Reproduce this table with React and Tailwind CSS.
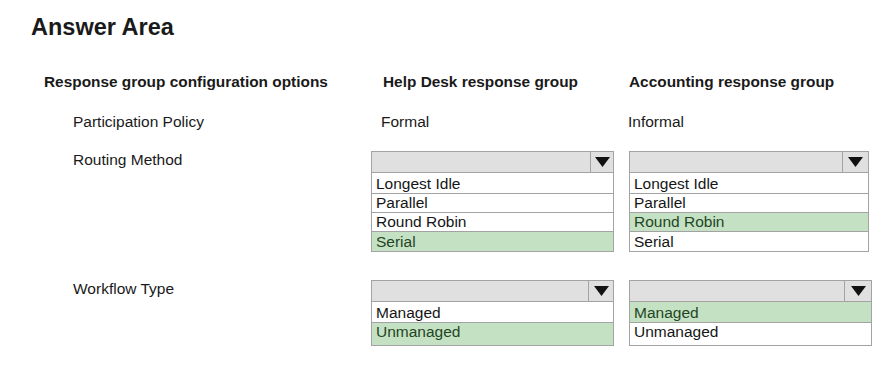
import React from 'react';

// Small down-pointing triangle used in the select headers
const Caret = () => (
    <svg width="15" height="10" viewBox="0 0 15 10">
        <polygon points="0,0 15,0 7.5,10" fill="#111" />
    </svg>
);

const DropList = ({ width, caretWidth, options, selected, rowHeights }) => (
    <div className={width}>
        {/* closed select header */}
        <div className="flex h-[22px] border border-[#a3a3a3] bg-[#e0e0e0]">
            <div className="flex-1" />
            <div className={`${caretWidth} flex items-center justify-center border-l border-[#a3a3a3]`}>
                <Caret />
            </div>
        </div>
        {/* option list */}
        <div className="border-x border-b border-[#a3a3a3]">
            {options.map((opt, i) => (
                <div
                    key={opt}
                    className={`flex items-end pl-[4px] text-[15.5px] leading-[18px] ${rowHeights[i]} ${i < options.length - 1 ? 'border-b border-[#a3a3a3]' : ''} ${opt === selected ? 'bg-[#c5e1c3] text-[#234523]' : 'bg-white text-[#151515]'}`}
                >
                    {opt}
                </div>
            ))}
        </div>
    </div>
);

const Row = ({ className, label, mid, right }) => (
    <div className={`flex ${className}`}>
        <div className="w-[327px] pl-[29px] text-[15.5px] leading-[18px]">{label}</div>
        <div className="w-[258px]">{mid}</div>
        <div className="flex-1">{right}</div>
    </div>
);

const ROUTING = ['Longest Idle', 'Parallel', 'Round Robin', 'Serial'];
const WORKFLOW = ['Managed', 'Unmanaged'];

export default function App() {
    return (
        <div className="w-[894px] h-[366px] overflow-hidden bg-white text-[#1a1a1a] font-['Liberation_Sans',Arial,sans-serif]">
            <h1 className="pl-[31px] pt-[13px] text-[23.5px] leading-[28px] font-bold">Answer Area</h1>

            <div className="pl-[44px]">
                {/* column headings */}
                <div className="flex mt-[32px] text-[15.4px] leading-[18px] font-bold">
                    <div className="w-[327px]">Response group configuration options</div>
                    <div className="w-[258px] pl-[12px]">Help Desk response group</div>
                    <div className="flex-1">Accounting response group</div>
                </div>

                <Row
                    className="mt-[22px]"
                    label="Participation Policy"
                    mid={<div className="pl-[10px] text-[15.5px] leading-[18px]">Formal</div>}
                    right={<div className="-ml-[1px] text-[15.5px] leading-[18px]">Informal</div>}
                />

                <Row
                    className="mt-[20px]"
                    label="Routing Method"
                    mid={
                        <DropList
                            width="w-[243px]"
                            caretWidth="w-[23px]"
                            options={ROUTING}
                            selected="Serial"
                            rowHeights={['h-[21px]', 'h-[19px]', 'h-[19px]', 'h-[19px]']}
                        />
                    }
                    right={
                        <DropList
                            width="w-[240px]"
                            caretWidth="w-[26px]"
                            options={ROUTING}
                            selected="Round Robin"
                            rowHeights={['h-[21px]', 'h-[19px]', 'h-[19px]', 'h-[19px]']}
                        />
                    }
                />

                <Row
                    className="mt-[28px]"
                    label="Workflow Type"
                    mid={
                        <DropList
                            width="w-[243px]"
                            caretWidth="w-[25px]"
                            options={WORKFLOW}
                            selected="Unmanaged"
                            rowHeights={['h-[21px]', 'h-[22px] pb-[4px]']}
                        />
                    }
                    right={
                        <DropList
                            width="w-[243px]"
                            caretWidth="w-[27px]"
                            options={WORKFLOW}
                            selected="Managed"
                            rowHeights={['h-[21px]', 'h-[22px] pb-[4px]']}
                        />
                    }
                />
            </div>
        </div>
    );
}
